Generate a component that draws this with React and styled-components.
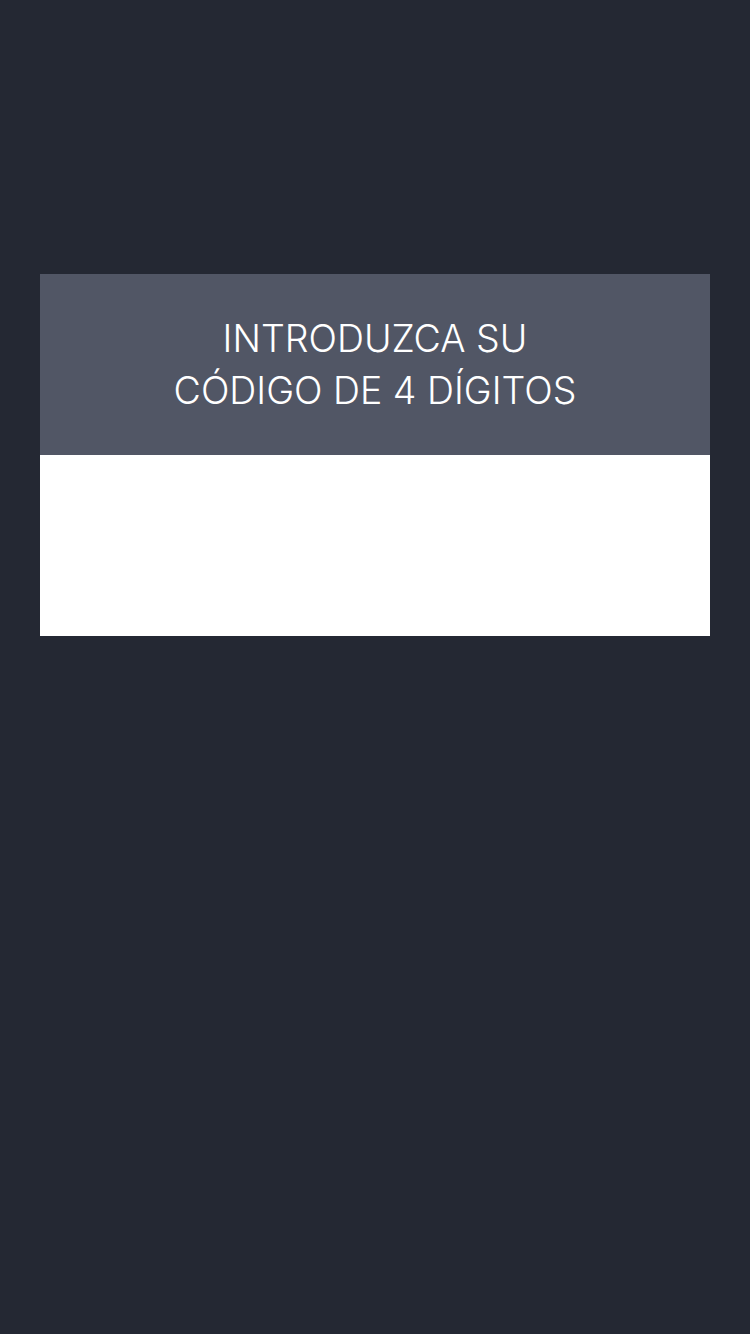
import React from 'react';
import styled, { createGlobalStyle } from 'styled-components';

const GlobalStyle = createGlobalStyle`
  html, body {
    margin: 0;
    padding: 0;
    background: #242833;
  }
  body {
    font-family: Inter, "Noto Sans", sans-serif;
  }
`;

const Screen = styled.div`
  width: 750px;
  height: 1334px;
  background: #242833;
  padding: 274px 40px 0;
  box-sizing: border-box;
`;

const Card = styled.div`
  display: flex;
  flex-direction: column;
`;

const Header = styled.div`
  height: 181px;
  background: #515665;
  display: flex;
  align-items: center;
  justify-content: center;
`;

const Title = styled.h1`
  margin: 0;
  color: #ffffff;
  font-size: 37.5px;
  font-weight: 300;
  line-height: 52px;
  text-align: center;
  text-transform: uppercase;
`;

const CodeArea = styled.div`
  height: 181px;
  background: #ffffff;
`;

export default function App() {
  return (
    <>
      <GlobalStyle />
      <Screen>
        <Card>
          <Header>
            <Title>
              Introduzca su
              <br />
              código de 4 dígitos
            </Title>
          </Header>
          <CodeArea />
        </Card>
      </Screen>
    </>
  );
}
